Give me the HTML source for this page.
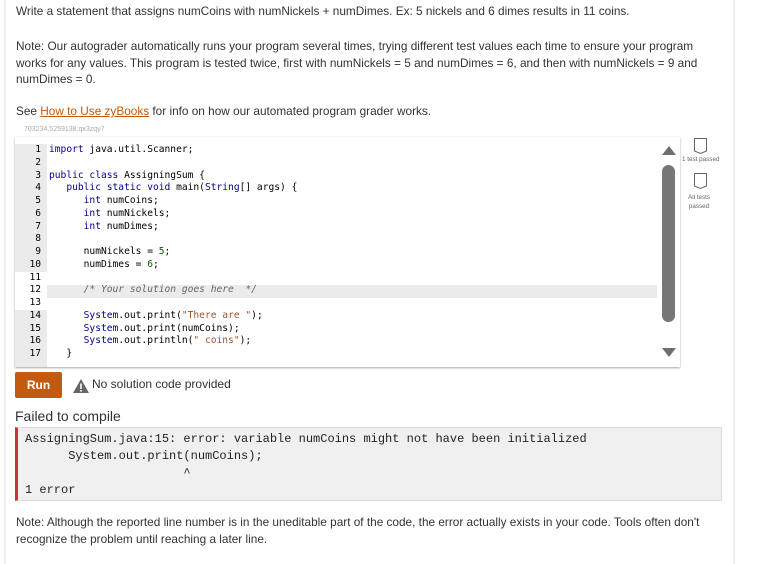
<!DOCTYPE html>
<html><head><meta charset="utf-8"><style>
*{margin:0;padding:0;box-sizing:border-box}
body{width:762px;height:564px;background:#fff;position:relative;overflow:hidden;font-family:"Liberation Sans",sans-serif;color:#333;font-size:11.8px}
.a{position:absolute;white-space:nowrap}
.bl{position:absolute;left:4px;top:0;width:2px;height:564px;background:#eee}
.br{position:absolute;left:733px;top:0;width:2px;height:564px;background:#eee}
a{color:#c25a0f;text-decoration:underline}
.ed{position:absolute;left:15px;top:137px;width:665px;height:230px;background:#fff;box-shadow:0 1px 2px rgba(0,0,0,.35)}
.gut{position:absolute;left:15px;width:32px;background:#ebebeb}
.code{font-family:"DejaVu Sans Mono","Liberation Mono",monospace;font-size:9.6px;line-height:12.75px;color:#000}
.ln{position:absolute;left:15px;width:26px;text-align:right}
.k{color:#00008b}.s{color:#a0522d}.n{color:#006400}.c{color:#666;font-style:italic}
.err{position:absolute;left:15px;top:427px;width:707px;height:74px;background:#f0f0f0;border:1px solid #ddd;border-left:3px solid #c8323c;font-family:"Liberation Mono",monospace;font-size:12px;color:#222}
</style></head><body>
<div class="bl"></div><div class="br"></div>
<div class="a" style="left:16px;top:4px">Write a statement that assigns numCoins with numNickels + numDimes. Ex: 5 nickels and 6 dimes results in 11 coins.</div>
<div class="a" style="left:16px;top:38px;line-height:16.5px">Note: Our autograder automatically runs your program several times, trying different test values each time to ensure your program<br>works for any values. This program is tested twice, first with numNickels = 5 and numDimes = 6, and then with numNickels = 9 and<br>numDimes = 0.</div>
<div class="a" style="left:16px;top:104px">See <a>How to Use zyBooks</a> for info on how our automated program grader works.</div>
<div class="a" style="left:24px;top:126px;font-size:7px;color:#aaa">703234.5259138.qx3zqy7</div>
<div class="ed"></div>
<div class="gut" style="top:144px;height:128px"></div>
<div class="gut" style="top:310px;height:57px"></div>
<div class="a" style="left:47px;top:285px;width:610px;height:13px;background:#ebebeb"></div>
<div class="a code" style="left:0;top:144px;width:660px">
<div class="ln" style="top:0">1</div><div class="ln" style="top:12.75px">2</div><div class="ln" style="top:25.5px">3</div><div class="ln" style="top:38.25px">4</div><div class="ln" style="top:51px">5</div><div class="ln" style="top:63.75px">6</div><div class="ln" style="top:76.5px">7</div><div class="ln" style="top:89.25px">8</div><div class="ln" style="top:102px">9</div><div class="ln" style="top:114.75px">10</div><div class="ln" style="top:127.5px">11</div><div class="ln" style="top:140.25px">12</div><div class="ln" style="top:153px">13</div><div class="ln" style="top:165.75px">14</div><div class="ln" style="top:178.5px">15</div><div class="ln" style="top:191.25px">16</div><div class="ln" style="top:204px">17</div>
<pre class="a code" style="left:49px;top:0;font:inherit;line-height:12.75px;white-space:pre"><span class="k">import</span> java.util.Scanner;

<span class="k">public class</span> AssigningSum {
   <span class="k">public static void</span> main(<span class="k">String</span>[] args) {
      <span class="k">int</span> numCoins;
      <span class="k">int</span> numNickels;
      <span class="k">int</span> numDimes;

      numNickels = <span class="n">5</span>;
      numDimes = <span class="n">6</span>;

      <span class="c">/* Your solution goes here  */</span>

      <span class="k">System</span>.out.print(<span class="s">"There are "</span>);
      <span class="k">System</span>.out.print(numCoins);
      <span class="k">System</span>.out.println(<span class="s">" coins"</span>);
   }</pre>
</div>
<svg class="a" style="left:659px;top:142px" width="20" height="220"><path d="M3 13 L10 4 L17 13Z" fill="#6f6f6f"/><rect x="3" y="23" width="13" height="157" rx="6.5" fill="#777"/><path d="M3 206 L10 215 L17 206Z" fill="#6f6f6f"/></svg>
<svg class="a" style="left:693px;top:137px" width="20" height="60"><path d="M1.5 1.5H13.5V14L7.5 16.5L1.5 14Z" fill="none" stroke="#666"/><path d="M1.5 36.5H13.5V49L7.5 51.5L1.5 49Z" fill="none" stroke="#666"/></svg>
<div class="a" style="left:682px;top:156px;font-size:6.3px;color:#666">1 test passed</div>
<div class="a" style="left:688px;top:193px;font-size:6.3px;color:#666;text-align:center;line-height:9px">All tests<br>passed</div>
<div class="a" style="left:15px;top:372px;width:47px;height:26px;background:#c25a0f;border-radius:2px;color:#fff;font-weight:bold;font-size:12px;text-align:center;line-height:26px">Run</div>
<svg class="a" style="left:72px;top:378px" width="18" height="16"><path d="M9 1L17 15H1Z" fill="#666"/><rect x="8.2" y="5.5" width="1.6" height="5.5" fill="#fff"/><rect x="8.2" y="12" width="1.6" height="1.6" fill="#fff"/></svg>
<div class="a" style="left:92px;top:377px;font-size:12px">No solution code provided</div>
<div class="a" style="left:15px;top:408px;font-size:14px;color:#333">Failed to compile</div>
<div class="err"><pre style="font:inherit;position:absolute;left:7px;top:3px;line-height:17px">AssigningSum.java:15: error: variable numCoins might not have been initialized
      System.out.print(numCoins);
                      ^
1 error</pre></div>
<div class="a" style="left:16px;top:514px;line-height:16.5px">Note: Although the reported line number is in the uneditable part of the code, the error actually exists in your code. Tools often don't<br>recognize the problem until reaching a later line.</div>
</body></html>
